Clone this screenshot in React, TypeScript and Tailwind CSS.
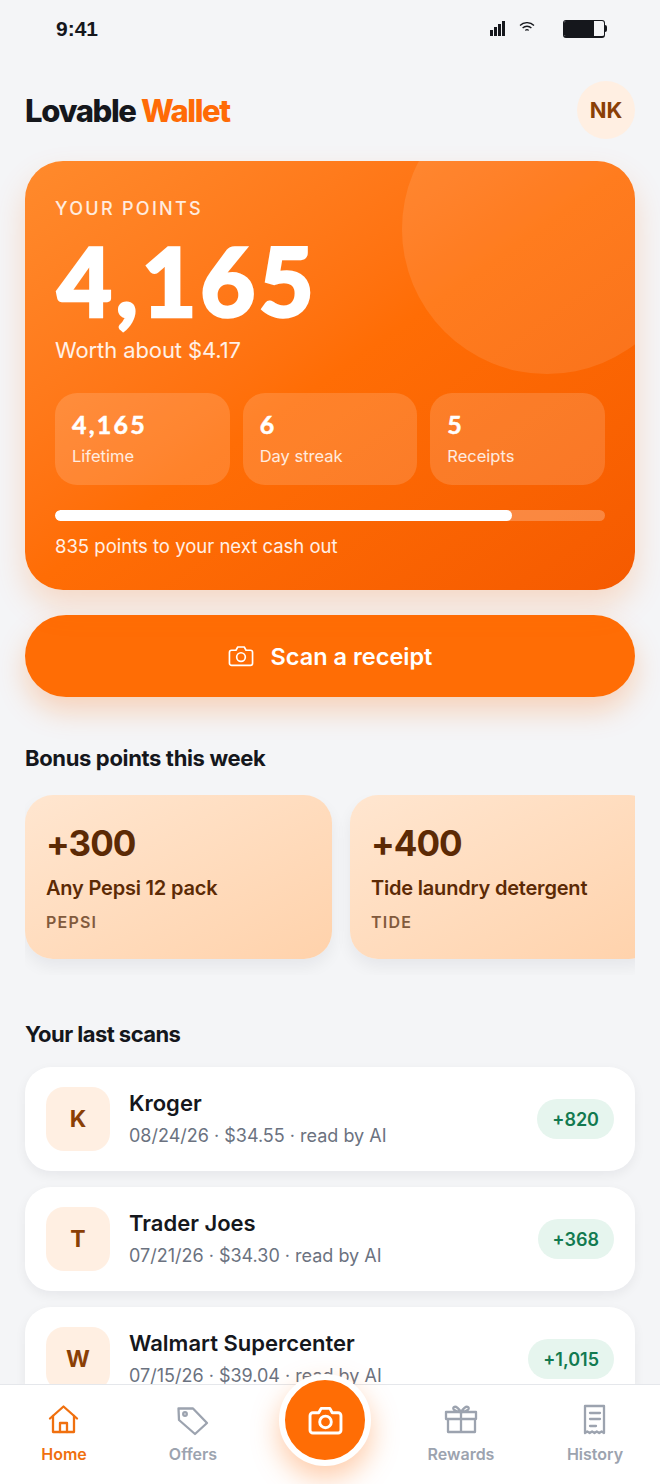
import type { ReactNode } from "react"

const font = { fontFamily: "Inter, sans-serif" }

const stats = [
  { value: "4,165", label: "Lifetime" },
  { value: "6", label: "Day streak" },
  { value: "5", label: "Receipts" },
]

const offers = [
  { points: "+300", title: "Any Pepsi 12 pack", brand: "PEPSI" },
  { points: "+400", title: "Tide laundry detergent", brand: "TIDE" },
]

const scans = [
  { letter: "K", name: "Kroger", meta: "08/24/26 · $34.55 · read by AI", points: "+820" },
  { letter: "T", name: "Trader Joes", meta: "07/21/26 · $34.30 · read by AI", points: "+368" },
  { letter: "W", name: "Walmart Supercenter", meta: "07/15/26 · $39.04 · read by AI", points: "+1,015" },
]

const CameraIcon = ({ className, strokeWidth }: { className: string; strokeWidth: number }) => (
  <svg viewBox="0 0 36 30" className={className} fill="none" stroke="currentColor" strokeWidth={strokeWidth} strokeLinejoin="round">
    <path d="M5 7h6l2.500-4.500h9L25 7h6a3 3 0 0 1 3 3v15a3 3 0 0 1-3 3H5a3 3 0 0 1-3-3V10a3 3 0 0 1 3-3z" />
    <circle cx="18" cy="16.500" r="6" />
  </svg>
)

const StatusBar = () => (
  <div className="flex h-[56px] items-center justify-between pl-[56px] pr-[53px] pt-[1px]">
    <span className="font-['Liberation_Sans'] text-[21px] font-bold text-[#15171c]">9:41</span>
    <div className="flex items-center">
      <svg width="16" height="16" viewBox="0 0 16 16" className="mr-[13px] fill-[#15171c]">
        <rect x="0" y="9" width="3" height="6" />
        <rect x="4" y="6" width="3" height="9" />
        <rect x="8" y="3" width="3" height="12" />
        <rect x="12" y="0" width="3" height="15" />
      </svg>
      <svg width="16" height="10" viewBox="0 0 16 10" className="mb-[3px] mr-[28px] fill-none stroke-[#15171c]" strokeWidth="1.3">
        <path d="M1 3.500a10 10 0 0 1 14 0" />
        <path d="M3.600 6a6.400 6.400 0 0 1 8.800 0" />
        <path d="M6.400 8.400a2.400 2.400 0 0 1 3.200 0" />
      </svg>
      <div className="flex items-center">
        <div className="h-[18px] w-[42px] overflow-hidden rounded-[3px] border border-b-2 border-[#15171c]">
          <div className="h-full w-[30px] bg-[#15171c]" />
        </div>
        <div className="h-[7px] w-[2px] rounded-r-sm bg-[#15171c]" />
      </div>
    </div>
  </div>
)

const Header = () => (
  <div className="mt-[24px] flex h-[60px] items-center justify-between px-[25px]">
    <h1 className="pt-[2px] text-[31px] font-extrabold tracking-[-1.4px] text-[#15171c]">
      Lovable <span className="text-[#ff6b06]">Wallet</span>
    </h1>
    <div className="flex h-[58px] w-[58px] items-center justify-center rounded-full bg-[#ffefe2] text-[22px] font-bold text-[#8a3f06]">
      NK
    </div>
  </div>
)

const PointsCard = () => (
  <div className="relative mx-[25px] mt-[21px] h-[429px] overflow-hidden rounded-[38px] bg-gradient-to-br from-[#ff8a2c] via-[#ff6d05] to-[#f55a00] px-[30px] pt-[37px] shadow-[0_16px_32px_rgba(255,107,6,0.2)]">
    <div className="absolute left-[377px] top-[-77px] h-[290px] w-[290px] rounded-full bg-white/10" />
    <div className="relative">
      <div className="text-[18px] font-medium leading-[22px] tracking-[2.3px] text-white/85">YOUR POINTS</div>
      <div className="mt-[6px] h-[110px] pl-[2px] font-['Lato'] text-[95px] font-black leading-[108px] tracking-[3.500px] text-white [-webkit-text-stroke:2.500px_white]">4,165</div>
      <div className="text-[22px] leading-[28px] tracking-[-0.1px] text-white/90">Worth about $4.17</div>
      <div className="mt-[29px] grid grid-cols-3 gap-[13px]">
        {stats.map((s) => (
          <div key={s.label} className="h-[92px] rounded-[22px] bg-white/15 px-[17px] pt-[16px]">
            <div className="font-['Lato'] text-[25px] font-bold leading-[30px] tracking-[2.200px] text-white [-webkit-text-stroke:0.5px_white]">{s.value}</div>
            <div className="mt-[5px] text-[16.500px] leading-[24px] text-white/85">{s.label}</div>
          </div>
        ))}
      </div>
      <div className="mt-[25px] h-[11px] overflow-hidden rounded-full bg-white/25">
        <div className="h-full w-[83%] rounded-full bg-white" />
      </div>
      <div className="mt-[12px] text-[18.500px] leading-[26px] text-white/90">835 points to your next cash out</div>
    </div>
  </div>
)

const ScanButton = () => (
  <div className="mx-[25px] mt-[25px] flex h-[82px] items-center justify-center gap-[17px] rounded-full bg-[#ff6d05] shadow-[0_14px_28px_rgba(255,107,6,0.25)]">
    <CameraIcon className="h-[22px] w-[26px] text-white" strokeWidth={2.300} />
    <span className="pt-[1px] text-[23.500px] font-semibold text-white">Scan a receipt</span>
  </div>
)

const Offers = () => (
  <div className="mt-[44px]">
    <h2 className="px-[25px] text-[22px] font-bold leading-[34px] tracking-[-0.35px] text-[#15171c]">Bonus points this week</h2>
    <div className="mx-[25px] mt-[20px] flex h-[180px] gap-[18px] overflow-hidden">
      {offers.map((o) => (
        <div key={o.brand} className="h-[164px] w-[307px] shrink-0 rounded-[28px] bg-gradient-to-br from-[#ffe6d0] to-[#ffd2ab] px-[21px] pt-[26px] shadow-[0_8px_16px_rgba(15,23,42,0.06)]">
          <div className="text-[35px] font-bold leading-[44px] tracking-[-1px] text-[#5c2a05]">{o.points}</div>
          <div className="mt-[9px] text-[20px] font-semibold leading-[28px] tracking-[-0.2px] text-[#5c2a05]">{o.title}</div>
          <div className="mt-[8px] text-[16px] font-semibold leading-[24px] tracking-[1.200px] text-[#825a3c]">{o.brand}</div>
        </div>
      ))}
    </div>
  </div>
)

const Scans = () => (
  <div className="mt-[42px]">
    <h2 className="px-[25px] text-[22px] font-bold leading-[34px] tracking-[-0.55px] text-[#15171c]">Your last scans</h2>
    <div className="mx-[25px] mt-[16px] flex flex-col gap-[16px]">
      {scans.map((s) => (
        <div key={s.name} className="flex h-[104px] items-center rounded-[26px] bg-white px-[21px] shadow-[0_4px_12px_rgba(15,23,42,0.06)]">
          <div className="flex h-[64px] w-[64px] items-center justify-center rounded-[18px] bg-[#ffefe2] text-[23px] font-bold text-[#8a3f06]">
            {s.letter}
          </div>
          <div className="ml-[19px] flex-1">
            <div className="text-[22px] font-semibold leading-[30px] text-[#15171c]">{s.name}</div>
            <div className="mt-[4px] text-[18px] leading-[28px] text-[#6b7280]">{s.meta}</div>
          </div>
          <div className="flex h-[40px] items-center rounded-full bg-[#e6f5ee] px-[15px] text-[18px] font-semibold text-[#127a50]">
            {s.points}
          </div>
        </div>
      ))}
    </div>
  </div>
)

const NavItem = ({ label, active, className, children }: { label: string; active?: boolean; className: string; children: ReactNode }) => (
  <div className={`flex w-[100px] flex-col items-center ${className} ${active ? "text-[#f0700f]" : "text-[#9ca3af]"}`}>
    <svg width="34" height="34" viewBox="0 0 34 34" fill="none" stroke="currentColor" strokeWidth="2.300" strokeLinejoin="round" strokeLinecap="round">
      {children}
    </svg>
    <span className="mt-[7px] text-[16px] font-semibold leading-[20px]">{label}</span>
  </div>
)

const BottomNav = () => (
  <div className="absolute bottom-0 left-0 right-0 h-[100px] border-t border-[#e5e7eb] bg-white">
    <div className="flex pt-[18px]">
      <NavItem label="Home" active className="ml-[14px]">
        <path d="M3 15.500L16.500 3.500 30 15.500" />
        <path d="M6 13v16h21V13" />
        <path d="M13 29v-9h7v9" />
      </NavItem>
      <NavItem label="Offers" className="ml-[29px]">
        <path d="M2.500 5.500H17L31 20 19 31 3 17z" />
        <circle cx="9" cy="11" r="1.800" />
      </NavItem>
      <NavItem label="Rewards" className="ml-[168px]">
        <path d="M2 9h30v7H2zM4 16v13h27V16M17 9v20" />
        <path d="M17 9c-2-3-5-6-7-5s0 5 7 5zM17 9c2-3 5-6 7-5s0 5-7 5z" />
      </NavItem>
      <NavItem label="History" className="ml-[34px]">
        <path d="M7 3h19v27l-2.400-1.500-2.400 1.500-2.400-1.500-2.300 1.500-2.400-1.500-2.400 1.500-2.400-1.500L7 30z" />
        <path d="M12 10h10M12 16h10M12 23h6" />
      </NavItem>
    </div>
    <div className="absolute left-[279px] top-[-11px] flex h-[92px] w-[92px] items-center justify-center rounded-full border-[6px] border-white bg-[#ff6d05] shadow-[0_12px_28px_rgba(255,107,6,0.35)]">
      <CameraIcon className="h-[29px] w-[35px] text-white" strokeWidth={3} />
    </div>
  </div>
)

const App = () => (
  <div className="relative h-[1484px] w-[660px] overflow-hidden bg-[#f4f5f7]" style={font}>
    <StatusBar />
    <Header />
    <PointsCard />
    <ScanButton />
    <Offers />
    <Scans />
    <BottomNav />
  </div>
)

export default App
